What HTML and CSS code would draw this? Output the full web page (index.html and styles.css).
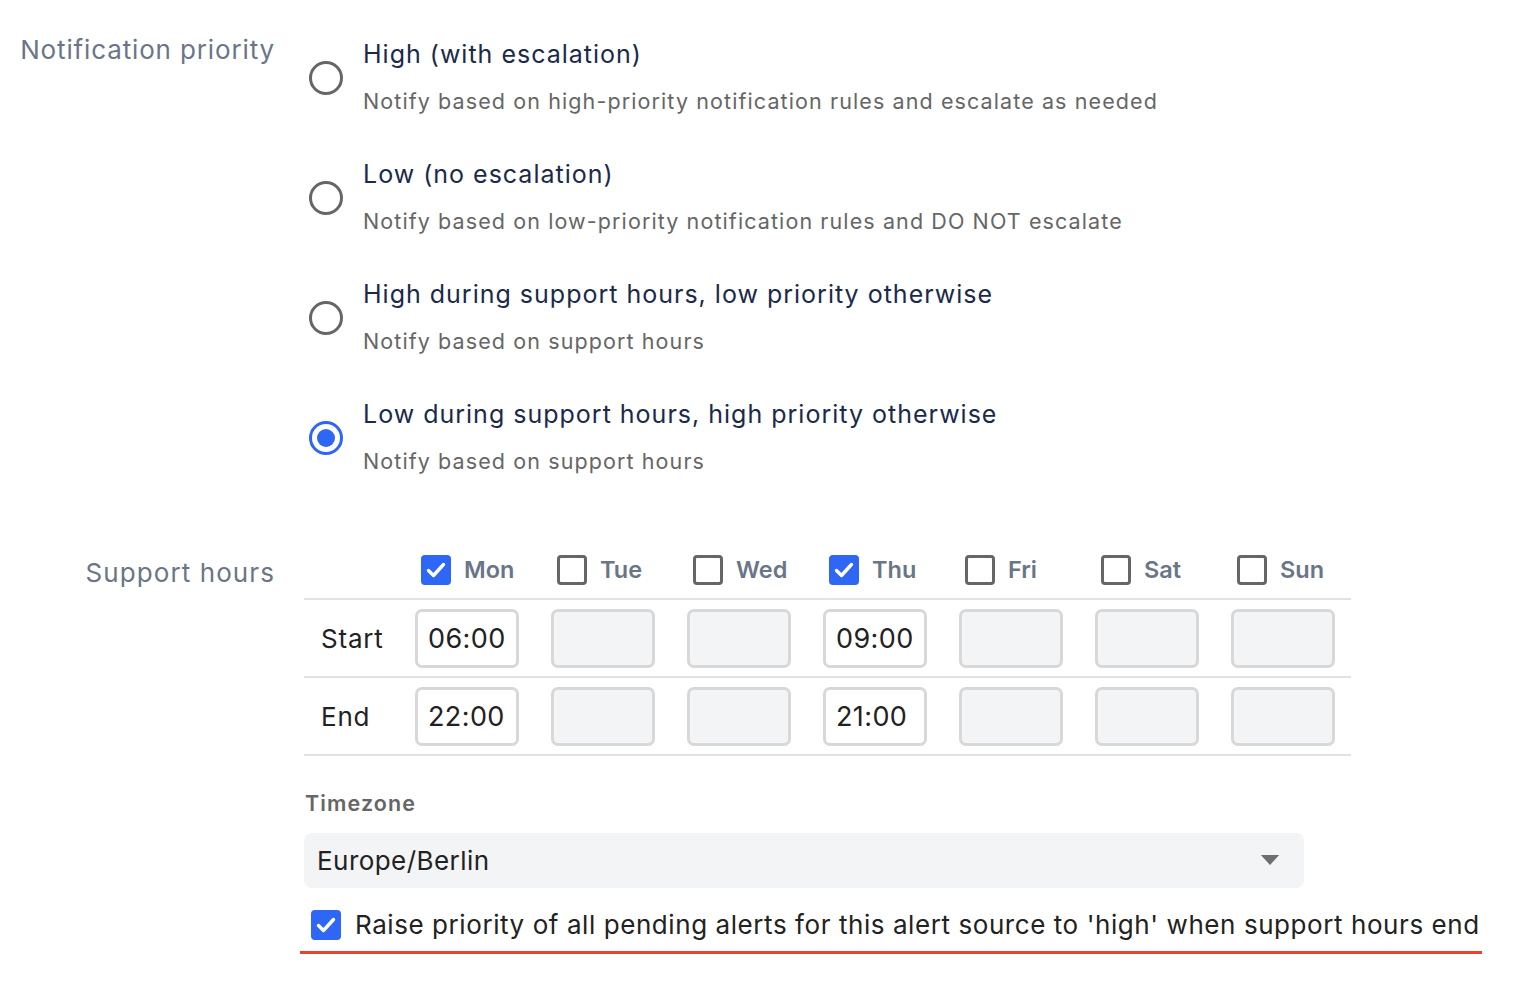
FILE: index.html
```html
<!DOCTYPE html>
<html>
<head>
<meta charset="utf-8">
<link rel="stylesheet" href="styles.css">
</head>
<body>
<div class="form">
  <div class="field">
    <div class="field-label label-top">Notification priority</div>
    <div class="field-body">
      <div class="option">
        <span class="radio"></span>
        <div class="option-text">
          <div class="option-title">High (with escalation)</div>
          <div class="option-desc">Notify based on high-priority notification rules and escalate as needed</div>
        </div>
      </div>
      <div class="option">
        <span class="radio"></span>
        <div class="option-text">
          <div class="option-title">Low (no escalation)</div>
          <div class="option-desc">Notify based on low-priority notification rules and DO NOT escalate</div>
        </div>
      </div>
      <div class="option">
        <span class="radio"></span>
        <div class="option-text">
          <div class="option-title">High during support hours, low priority otherwise</div>
          <div class="option-desc">Notify based on support hours</div>
        </div>
      </div>
      <div class="option">
        <span class="radio checked"></span>
        <div class="option-text">
          <div class="option-title">Low during support hours, high priority otherwise</div>
          <div class="option-desc">Notify based on support hours</div>
        </div>
      </div>
    </div>
  </div>

  <div class="field field-hours">
    <div class="field-label label-hours">Support hours</div>
    <div class="field-body">
      <table class="hours">
        <colgroup>
          <col class="col-label">
          <col class="col-day"><col class="col-day"><col class="col-day"><col class="col-day">
          <col class="col-day"><col class="col-day"><col class="col-day">
        </colgroup>
        <thead>
          <tr>
            <th class="rowlabel"></th>
            <th><span class="day"><span class="cb on"><svg viewBox="0 0 30 30"><path d="M7.5 15.5l5 5 10-11" /></svg></span>Mon</span></th>
            <th><span class="day"><span class="cb"></span>Tue</span></th>
            <th><span class="day"><span class="cb"></span>Wed</span></th>
            <th><span class="day"><span class="cb on"><svg viewBox="0 0 30 30"><path d="M7.5 15.5l5 5 10-11" /></svg></span>Thu</span></th>
            <th><span class="day"><span class="cb"></span>Fri</span></th>
            <th><span class="day"><span class="cb"></span>Sat</span></th>
            <th><span class="day"><span class="cb"></span>Sun</span></th>
          </tr>
        </thead>
        <tbody>
          <tr>
            <td class="rowlabel">Start</td>
            <td><span class="time">06:00</span></td>
            <td><span class="time off"></span></td>
            <td><span class="time off"></span></td>
            <td><span class="time">09:00</span></td>
            <td><span class="time off"></span></td>
            <td><span class="time off"></span></td>
            <td><span class="time off"></span></td>
          </tr>
          <tr>
            <td class="rowlabel">End</td>
            <td><span class="time">22:00</span></td>
            <td><span class="time off"></span></td>
            <td><span class="time off"></span></td>
            <td><span class="time">21:00</span></td>
            <td><span class="time off"></span></td>
            <td><span class="time off"></span></td>
            <td><span class="time off"></span></td>
          </tr>
        </tbody>
      </table>

      <div class="tz-label">Timezone</div>
      <div class="select">
        <span>Europe/Berlin</span>
        <svg class="caret" viewBox="0 0 20 12"><path d="M0 0h20L10 11z"/></svg>
      </div>

      <div class="raise">
        <span class="cb on"><svg viewBox="0 0 30 30"><path d="M7.5 15.5l5 5 10-11" /></svg></span>
        <span class="raise-text">Raise priority of all pending alerts for this alert source to 'high' when support hours end</span>
      </div>
    </div>
  </div>
</div>
</body>
</html>
```

FILE: styles.css
```css
* { box-sizing: border-box; }
html, body { margin: 0; padding: 0; background: #fff; }
body {
  font-family: Inter, "Noto Sans", "Liberation Sans", sans-serif;
  color: #222;
}
.form { padding-top: 38px; }
.field {
  display: grid;
  grid-template-columns: 274px 1fr;
  column-gap: 30px;
}
.field-label {
  text-align: right;
  color: #6b7588;
  font-size: 26px;
  line-height: 24px;
  letter-spacing: 0.86px;
  margin-right: -1px;
}
.label-top { padding-top: 0; }
.field-body { min-width: 0; }

.option {
  display: flex;
  align-items: center;
  gap: 20px;
  margin-bottom: 43px;
}
.option:last-child { margin-bottom: 0; }
.radio {
  flex: none;
  width: 34px;
  height: 34px;
  margin-left: 5px;
  margin-top: 2px;
  border: 3px solid #666;
  border-radius: 50%;
  display: flex;
  align-items: center;
  justify-content: center;
}
.radio.checked { border-color: #2e66f6; }
.radio.checked::after {
  content: "";
  width: 18px;
  height: 18px;
  border-radius: 50%;
  background: #2e66f6;
}
.option-title {
  font-size: 25px;
  line-height: 32px;
  color: #1c2a4a;
  letter-spacing: 1px;
}
.option-desc {
  margin-top: 17px;
  font-size: 21.5px;
  line-height: 28px;
  color: #666;
  letter-spacing: 1.1px;
}

.field-hours { margin-top: 66px; }
.label-hours { padding-top: 20px; line-height: 24px; letter-spacing: 1.08px; }

.hours {
  border-collapse: collapse;
  table-layout: fixed;
  width: 1047px;
}
.col-label { width: 95px; }
.col-day { width: 136px; }
.hours th, .hours td {
  padding: 0 16px;
  text-align: left;
  font-weight: normal;
}
.hours thead th { height: 58px; }
.hours tbody td {
  height: 78px;
  border-top: 2px solid #e2e2e2;
}
.hours tbody tr:last-child td { border-bottom: 2px solid #e2e2e2; }
.hours .rowlabel {
  padding-left: 17px;
  padding-right: 0;
  font-size: 26px;
  color: #222;
  letter-spacing: 0.8px;
}
.day {
  display: inline-flex;
  align-items: center;
  gap: 13px;
  margin-left: 6px;
  font-size: 23.5px;
  font-weight: 600;
  color: #6b7588;
  vertical-align: middle;
}
.cb {
  flex: none;
  width: 30px;
  height: 30px;
  border: 3px solid #666;
  border-radius: 4px;
  display: inline-flex;
}
.cb.on {
  border: none;
  background: #2e66f6;
}
.cb svg { width: 30px; height: 30px; }
.cb path {
  fill: none;
  stroke: #fff;
  stroke-width: 3.4;
  stroke-linecap: round;
  stroke-linejoin: round;
}
.time {
  display: flex;
  align-items: center;
  width: 104px;
  height: 59px;
  border: 3px solid #d8d8d8;
  border-radius: 7px;
  padding-left: 10px;
  font-size: 27px;
  color: #222;
  background: #fff;
  letter-spacing: 0.4px;
}
.time.off { background: #f3f4f6; }

.tz-label {
  margin-top: 33px;
  font-size: 21.5px;
  font-weight: 600;
  line-height: 28px;
  color: #666;
  padding-left: 1px;
  letter-spacing: 1.1px;
}
.select {
  margin-top: 16px;
  width: 1000px;
  height: 55px;
  background: #f3f4f6;
  border-radius: 8px;
  display: flex;
  align-items: center;
  justify-content: space-between;
  padding: 0 24px 0 13px;
  font-size: 26px;
  color: #222;
  letter-spacing: 0.45px;
}
.caret { width: 20px; height: 11px; fill: #6e6e6e; }

.raise {
  display: inline-flex;
  align-items: center;
  gap: 14px;
  margin-top: 21px;
  margin-left: -4px;
  padding: 0 2px 11px 11px;
  border-bottom: 3px solid #e8432e;
  font-size: 26px;
  color: #222;
  white-space: nowrap;
  letter-spacing: 0.57px;
}
```
